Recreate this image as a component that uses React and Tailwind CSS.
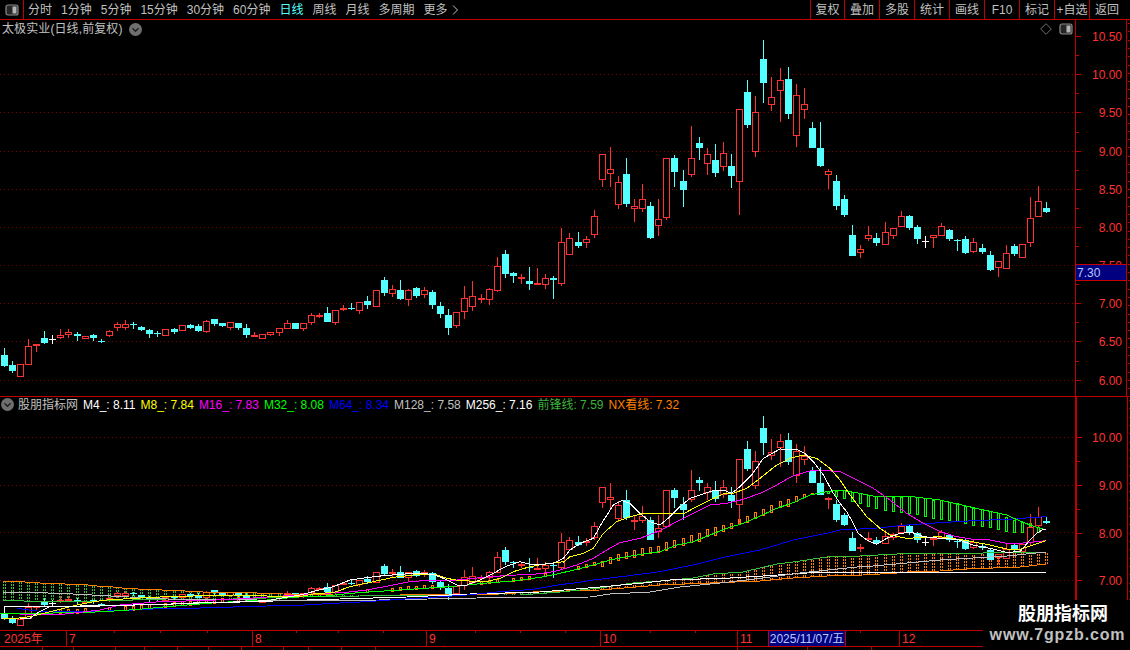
import React from "react";

const RED = "#ff3232", CY = "#54ffff", LINE = "#c00000";
const A = [[294,315,347,350,'c'],[333,345,362,368,'c'],[343,343,380,380,'r'],[267,289,344,344,'r'],[282,282,288,305,'r'],[243,265,279,281,'c'],[255,268,269,281,'w'],[237,256,263,266,'r'],[237,247,254,263,'r'],[246,252,257,272,'c'],[257,257,266,266,'r'],[252,255,263,272,'c'],[267,272,274,278,'c'],[241,244,257,262,'r'],[216,222,233,242,'r'],[210,222,233,240,'r'],[216,222,224,236,'c'],[228,232,240,242,'c'],[237,240,251,263,'c'],[243,250,252,260,'c'],[238,238,257,259,'r'],[234,237,246,251,'c'],[226,226,242,242,'r'],[222,225,234,236,'c'],[222,228,243,245,'c'],[210,214,245,248,'r'],[207,207,222,228,'c'],[219,219,228,231,'c'],[216,217,233,239,'r'],[219,219,234,239,'c'],[222,234,255,263,'c'],[246,255,260,262,'r'],[252,253,266,266,'r'],[247,247,254,258,'r'],[234,235,248,258,'r'],[210,220,236,237,'r'],[219,219,237,237,'c']];
const B = [[340,340,356,362,'r'],[310,316,338,344,'r'],[310,316,320,323,'r'],[291,309,336,336,'c'],[300,301,338,345,'r'],[286,294,299,302,'r'],[280,294,297,300,'c'],[276,277,302,312,'r'],[258,273,285,296,'c'],[241,241,290,290,'r'],[201,210,249,258,'c'],[225,238,251,261,'r'],[210,240,267,270,'c'],[238,241,269,287,'r'],[231,234,258,264,'c'],[232,241,254,263,'r'],[240,246,285,297,'c'],[276,288,312,324,'c'],[297,315,354,375,'c'],[306,307,347,354,'r'],[228,265,305,327,'r'],[213,259,290,303,'r'],[252,264,269,279,'r'],[234,238,269,285,'r'],[141,169,242,245,'r'],[120,132,192,204,'c'],[186,189,198,219,'c'],[192,201,206,222,'r'],[171,213,222,240,'c'],[174,220,222,224,'r'],[192,205,224,237,'r'],[198,204,210,267,'c'],[54,97,221,228,'r'],[69,85,134,135,'r'],[66,96,108,114,'c'],[78,88,98,114,'r']];
const C = [[541,559,616,624,'r'],[373,373,449,470,'r'],[352,418,433,471,'r'],[438,457,524,537,'r'],[384,432,522,530,'c'],[507,529,536,576,'r'],[462,508,536,545,'r'],[516,528,624,627,'c'],[507,568,587,618,'r'],[385,385,563,569,'r'],[375,384,426,471,'c'],[420,453,480,531,'c'],[288,385,434,441,'r'],[321,339,354,390,'c'],[354,373,401,435,'r'],[342,390,429,441,'c'],[336,370,410,423,'r'],[372,408,438,474,'c'],[238,238,455,555,'r'],[150,186,285,294,'c'],[198,247,365,381,'r'],[30,87,159,219,'c'],[141,202,224,243,'r'],[114,151,182,276,'r'],[111,147,252,267,'c'],[162,196,317,351,'r'],[174,223,239,267,'r'],[276,294,354,354,'c'],[276,354,408,411,'c'],[417,424,434,477,'r'],[435,453,528,540,'c']];
const D = [[75,87,135,140,'c'],[165,195,258,258,'c'],[225,238,248,264,'r'],[168,196,206,213,'r'],[189,204,219,228,'c'],[156,187,224,225,'r'],[174,175,197,207,'r'],[123,139,171,171,'r'],[135,138,174,180,'c'],[165,171,207,222,'c'],[198,214,216,234,'w'],[196,196,203,234,'r'],[159,169,197,198,'r'],[177,180,207,213,'c'],[207,211,214,243,'c'],[198,207,249,252,'c'],[205,217,246,249,'r'],[222,234,246,252,'c'],[243,255,300,303,'c'],[274,274,293,321,'r'],[225,250,296,297,'r'],[222,228,252,258,'c'],[222,223,263,264,'r'],[81,145,218,231,'r'],[48,94,140,141,'r'],[96,114,126,129,'c']];

const toAbs = (arr, y0) => arr.map(([a, b, c, d, t]) => [y0 + a / 3, y0 + b / 3, y0 + c / 3, y0 + d / 3, t]);
const CANDLES = [...toAbs(A, 250), ...toAbs(B, 210), ...toAbs(C, 30), ...toAbs(D, 170)];
const cx = (i) => Math.floor(4.33 + 8.08 * i);

const P = (x0, y0, a) => a.map(([x, y]) => [x0 + x / 3, y0 + y / 3]);
const join = (...segs) => {
  let out = [];
  segs.forEach((s) => {
    out = out.filter((p) => p[0] < s[0][0]).concat(s);
  });
  return out;
};
const M4 = join(
  P(0, 550, [[60,205],[90,205],[115,187],[150,170],[200,170],[300,165],[400,165],[500,163],[600,158],[700,156],[800,152],[900,150]]),
  P(300, 540, [[0,165],[50,152],[100,140],[150,120],[200,113],[250,107],[300,103],[350,100],[400,103],[430,115],[470,135],[500,135],[540,120],[580,100],[620,78],[660,65],[700,75],[760,70],[790,55]]),
  P(560, 410, [[10,445],[30,420],[60,400],[100,385],[125,340],[160,285],[185,272],[210,280],[240,310],[270,335],[300,345],[330,320],[360,290],[390,265],[420,255],[460,242],[490,240],[515,250],[540,230],[575,195],[610,145],[660,117],[710,118],[735,130],[760,155],[790,195],[820,250],[850,300],[880,345]]),
  P(840, 470, [[0,100],[20,125],[40,160],[55,190],[80,210],[110,223],[140,205],[180,190],[215,187],[250,200],[300,205],[350,208],[400,225],[450,235],[500,247],[540,245],[570,210],[590,190],[610,178],[618,180]])
);
const M8 = join(
  P(0, 550, [[5,205],[50,205],[90,200],[130,190],[190,175],[230,165],[280,155],[320,150],[400,145],[500,140],[700,135],[800,138],[900,135]]),
  P(300, 540, [[0,170],[50,160],[100,158],[150,140],[220,125],[280,112],[340,105],[400,102],[440,115],[480,122],[560,125],[600,115],[640,95],[690,80],[730,73],[790,65]]),
  P(560, 410, [[10,457],[30,440],[70,430],[100,415],[130,370],[170,335],[210,320],[250,310],[370,312],[400,295],[450,270],[490,252],[520,250],[560,235],[600,205],[650,165],[690,145],[730,135],[770,145],[810,175],[850,230]]),
  P(840, 470, [[0,30],[30,75],[80,140],[120,175],[150,195],[200,205],[300,200],[370,210],[450,225],[500,237],[540,238],[580,225],[618,212]])
);
const M16 = join(
  P(0, 550, [[60,195],[120,192],[170,195],[240,187],[300,180],[360,165],[420,160],[480,155],[600,152],[700,148],[850,138],[900,135]]),
  P(300, 540, [[0,165],[60,160],[130,158],[200,150],[280,135],[330,125],[400,120],[470,120],[570,110],[650,105],[700,103],[750,97]]),
  P(560, 410, [[0,480],[50,465],[100,445],[140,420],[180,398],[240,385],[300,362],[350,335],[400,310],[450,285],[500,280],[550,268],[600,250],[650,225],[700,197],[750,183],[800,182]]),
  P(840, 470, [[0,5],[50,30],[100,55],[150,90],[200,130],[250,160],[300,185],[350,200],[400,208],[450,210],[500,220],[540,220],[580,216],[618,212]])
);
const M32 = join(
  P(0, 550, [[0,190],[80,190],[240,188],[310,185],[375,181],[440,176],[500,170],[560,165],[620,160],[700,155],[800,150],[900,143]]),
  P(300, 540, [[0,170],[60,170],[150,160],[220,155],[300,150],[370,145],[450,140],[550,130],[650,122],[720,112]]),
  P(560, 410, [[0,490],[50,478],[100,465],[150,450],[200,440],[250,432],[300,425],[350,405],[400,395],[450,375],[500,355],[550,340],[600,318],[650,295],[700,278],[750,255],[800,245],[850,243]]),
  P(840, 470, [[0,60],[30,65],[60,70],[100,78],[200,78],[300,90],[400,113],[500,135],[540,153],[570,165],[618,180]])
);
const M64 = join(
  P(0, 550, [[50,175],[110,183],[240,185],[320,183],[400,180],[500,175],[600,174],[700,171],[800,168],[900,165]]),
  P(300, 540, [[0,196],[100,190],[200,185],[300,178],[400,172],[500,165],[600,155],[700,148],[780,137]]),
  P(560, 410, [[0,524],[50,518],[100,510],[200,498],[300,485],[400,465],[500,440],[600,420],[700,390],[800,370],[840,364]]),
  P(840, 470, [[0,180],[100,175],[200,165],[300,158],[400,152],[500,148],[618,140]])
);
const M128 = [[3,592],[23,592],[73,594],[167,599],[257,600],[330,601],[477,598],[590,597],[610,594],[650,592],[680,587],[720,583],[763,578],[800,573],[857,567],[873,566],[907,563],[940,560],[973,558],[1007,556],[1046,552]];
const M256 = [[4,615],[4,607],[100,606],[207,603],[340,599],[407,597],[470,594],[540,592],[600,587],[643,583],[670,580],[730,578],[763,576],[807,573],[1046,572]];
const FRONT = [[3,600],[23,600],[25,602],[100,601],[167,599],[207,600],[233,599],[267,598],[300,597],[360,596],[440,595],[520,595],[560,592],[600,588],[633,583],[660,581],[693,578],[713,574],[743,572],[777,564],[793,562],[827,557],[860,556],[897,554],[937,553],[983,553],[1046,552]];
const NX = [[3,581],[25,582],[40,583],[65,584],[88,585],[97,586],[113,587],[122,588],[138,589],[162,590],[185,591],[203,592],[227,592],[257,593],[283,594],[333,595],[400,595],[500,594],[533,592],[600,590],[660,585],[710,583],[760,581],[793,578],[827,576],[863,575],[897,573],[907,572],[940,571],[967,569],[1020,567],[1046,564]];

const at = (line, x) => {
  if (x <= line[0][0]) return line[0][1];
  for (let k = 1; k < line.length; k++) {
    if (x <= line[k][0]) {
      const [x0, y0] = line[k - 1], [x1, y1] = line[k];
      return x1 === x0 ? y1 : y0 + ((y1 - y0) * (x - x0)) / (x1 - x0);
    }
  }
  return line[line.length - 1][1];
};

const ORANGE_SMALL = [7,8,9,10,13,15,16,17,18,20,21,22,23,24,25,26,27,29,30,31,45,48,49,50,51,52,53,59,60,61,63,64,65,67,71,72,73];
const ORANGE_BARS = [[453,468],[440,458],[432,450],[427,445],[420,440],[413,434],[411,430],[408,427],[397,422],[391,411],[384,405],[375,397],[370,393],[358,380],[351,375],[345,362],[339,355],[327,343],[318,335],[307,325],[297,315],[285,305],[274,292],[267,287],[258,272],[253,263],[250,253]].map(([a, b]) => [410 + a / 3, 410 + b / 3]);
const GREEN_BARS_8 = [[243,250],[243,258]].map(([a, b]) => [410 + a / 3, 410 + b / 3]);
const GREEN_BARS_9 = [[60,85],[65,92],[70,100],[75,108],[78,115],[78,120],[80,123],[80,125],[78,128],[82,133],[85,140],[90,145],[90,148],[95,150],[100,153],[108,158],[113,163],[118,168],[123,172],[130,178],[140,183],[150,186],[157,188],[160,170],[172,187]].map(([a, b]) => [470 + a / 3, 470 + b / 3]);

const Candles = ({ map }) =>
  CANDLES.map(([wt, bt, bb, wb, t], i) => {
    const x = cx(i);
    const top = Math.round(map(bt)), bot = Math.round(map(bb));
    const col = t === "c" ? CY : t === "r" ? RED : "#ffffff";
    const wx = x + 0.5;
    return (
      <g key={i}>
        <line x1={wx} x2={wx} y1={map(wt)} y2={map(wb)} stroke={col} strokeWidth="1" />
        {t === "r" ? (
          <rect x={x - 2.5} y={top + 0.5} width="6" height={Math.max(1, bot - top - 1)} fill="#000" stroke={col} strokeWidth="1" />
        ) : (
          <rect x={x - 3} y={top} width="7" height={Math.max(1, bot - top)} fill={col} />
        )}
      </g>
    );
  });

const Line = ({ pts, c, w = 1 }) => (
  <polyline points={pts.map((p) => p.join(",")).join(" ")} fill="none" stroke={c} strokeWidth={w} />
);
const Grid = ({ ys }) =>
  ys.map((y) => <line key={y} x1="0" x2="1075" y1={y + 0.5} y2={y + 0.5} stroke="#800000" strokeWidth="1" strokeDasharray="1 3" />);

const Bar = ({ x, t, b, c }) => (
  <rect x={x - 0.5} y={Math.round(t) + 0.5} width="2" height={Math.max(1, Math.round(b - t))} fill="none" stroke={c} strokeWidth="1" />
);

const toLower = (y) => 533 + ((y - 227.3) * 47.7) / 76.4;

const HalfBox = () => (
  <svg width="14" height="12" viewBox="0 0 14 12" className="shrink-0">
    <rect x="1" y="1" width="12" height="10" rx="2" fill="#262626" stroke="#8a8a8a" strokeWidth="1.2" />
    <rect x="7.5" y="2.5" width="4" height="7" fill="#b4b4b4" />
  </svg>
);
const Chevron = () => (
  <svg width="13" height="13" viewBox="0 0 13 13" className="shrink-0">
    <circle cx="6.5" cy="6.5" r="6.5" fill="#6f6f6f" />
    <path d="M3.5 5.2 L6.5 8.2 L9.5 5.2" fill="none" stroke="#1e1e1e" strokeWidth="1.4" />
  </svg>
);

const Axis = ({ labels, height, thick, children }) => {
  const rightTicks = [];
  for (let y = 3; y < height; y += 8.3) rightTicks.push(Math.round(y));
  return (
    <div className={`relative w-[55px] h-full shrink-0 ${thick ? "border-l-2" : "border-l"} border-[#c00000]`}>
      <div className="h-full w-[51px] border-r border-[#c00000]" />
      <svg className="absolute inset-0" width="55" height={height} shapeRendering="crispEdges">
        {labels.map(([t, y, minorY]) => (
          <g key={t}>
            <line x1="0" x2="5" y1={y + 0.5} y2={y + 0.5} stroke={LINE} />
            <line x1="0" x2="3" y1={minorY + 0.5} y2={minorY + 0.5} stroke={LINE} />
          </g>
        ))}
        {rightTicks.map((y) => (
          <line key={y} x1="52" x2="54" y1={y + 0.5} y2={y + 0.5} stroke={LINE} />
        ))}
      </svg>
      {labels.map(([t, y]) => (
        <span key={t} className="absolute right-[8px] leading-[14px] text-[#ff3232] text-[12px]" style={{ top: y - 6 }}>
          {t}
        </span>
      ))}
      {children}
    </div>
  );
};

const TABS = ["分时", "1分钟", "5分钟", "15分钟", "30分钟", "60分钟", "日线", "周线", "月线", "多周期"];
const TOOLS = [["复权", 34], ["叠加", 35], ["多股", 35], ["统计", 35], ["画线", 35], ["F10", 35], ["标记", 35], ["+自选", 35], ["返回", 35]];
const TOP_LABELS = [["10.50",36,55],["10.00",74,93],["9.50",112,132],["9.00",151,170],["8.50",189,208],["8.00",227,246],["7.50",265,284],["7.00",303,322],["6.50",341,361],["6.00",380,399]].map(([t, y, m]) => [t, y - 20, m - 20]);
const LOW_LABELS = [["10.00",437,461],["9.00",485,509],["8.00",533,556],["7.00",580,600]].map(([t, y, m]) => [t, y - 397, m - 397]);
const INDICATORS = [
  ["M4_: 8.11", "text-white"],
  ["M8_: 7.84", "text-[#ffff00]"],
  ["M16_: 7.83", "text-[#ff00ff]"],
  ["M32_: 8.08", "text-[#00ff00]"],
  ["M64_: 8.34", "text-[#0000ff]"],
  ["M128_: 7.58", "text-[#c0c0c0]"],
  ["M256_: 7.16", "text-white"],
  ["前锋线: 7.59", "text-[#3cb43c]"],
  ["NX看线: 7.32", "text-[#ff8000]"],
];
const MONTHS = [["2025年", 67], ["7", 186], ["8", 174], ["9", 174], ["10", 137], ["11", 162], ["12", 230]];

export default function App() {
  return (
    <div className="relative w-[1130px] h-[650px] overflow-hidden bg-black text-[12px] text-[#c0c0c0] font-['Liberation_Sans','Noto_Sans_CJK_SC',sans-serif]">
      {/* toolbar */}
      <div className="flex h-[20px] items-stretch border-b border-[#c00000]">
        <div className="flex w-[24px] shrink-0 items-center justify-center border-r border-[#c00000]">
          <HalfBox />
        </div>
        <div className="flex flex-1 items-center gap-[9px] pl-[4px] leading-none">
          {TABS.map((t) => (
            <span key={t} className={t === "日线" ? "text-[#54ffff]" : ""}>{t}</span>
          ))}
          <span className="flex items-center gap-[4px]">
            更多
            <svg width="7" height="10" viewBox="0 0 7 10"><path d="M1 0.5 L5.5 5 L1 9.5" fill="none" stroke="#c0c0c0" /></svg>
          </span>
        </div>
        <div className="flex">
          {TOOLS.map(([t, w], i) => (
            <div key={t} className={`flex items-center justify-center border-l border-[#c00000] ${i === 8 ? "w-[41px] pr-[6px]" : w === 34 ? "w-[34px]" : "w-[35px]"}`}>
              {t}
            </div>
          ))}
        </div>
      </div>

      {/* main pane */}
      <div className="flex h-[377px] border-b border-[#c00000]">
        <div className="relative w-[1075px] shrink-0 overflow-hidden">
          <svg className="absolute inset-0" width="1075" height="376" viewBox="0 20 1075 376" shapeRendering="crispEdges">
            <Grid ys={[74,112,151,189,227,265,303,341,380]} />
            <Candles map={(y) => y} />
          </svg>
          <div className="relative flex h-[18px] items-center gap-[6px] pl-[2px]">
            <span className="tracking-[0.1px]">太极实业(日线,前复权)</span>
            <Chevron />
          </div>
          <div className="absolute right-[2px] top-[3px] flex items-center gap-[7px]">
            <svg width="12" height="12" viewBox="0 0 12 12"><path d="M6 0.7 L11.3 6 L6 11.3 L0.7 6 Z" fill="none" stroke="#6f6f6f" /></svg>
            <HalfBox />
          </div>
        </div>
        <Axis labels={TOP_LABELS} height={376}>
          <div className="absolute left-[-1px] top-[244px] flex h-[17px] w-[52px] items-center border border-[#c80000] bg-[#000080] pl-[1px] text-[#b8c8ff]">
            7.30
          </div>
        </Axis>
      </div>

      {/* indicator pane */}
      <div className="flex h-[233px]">
        <div className="relative w-[1075px] shrink-0 overflow-hidden">
          <svg className="absolute inset-0" width="1075" height="233" viewBox="0 397 1075 233" shapeRendering="crispEdges">
            <Grid ys={[437,485,532,580]} />
            {CANDLES.map((_, i) => {
              const x = cx(i);
              const a = Math.round(at(NX, x)), b = Math.round(at(FRONT, x));
              const c = a < b ? "#38c038" : "#ff8000";
              return (
                <g key={i}>
                  <line x1={x - 0.5} x2={x - 0.5} y1={a} y2={b} stroke={c} strokeDasharray="2 1" />
                  <line x1={x + 1.5} x2={x + 1.5} y1={a} y2={b} stroke={c} strokeDasharray="2 1" />
                </g>
              );
            })}
            {ORANGE_SMALL.map((i) => {
              const b = at(M32, cx(i));
              return <Bar key={i} x={cx(i)} t={b - (i < 32 ? 4 : 3)} b={b} c="#ff8000" />;
            })}
            {ORANGE_BARS.map(([t, b], k) => <Bar key={k} x={cx(74 + k)} t={t} b={b} c="#ff8000" />)}
            {GREEN_BARS_8.map(([t, b], k) => <Bar key={k} x={cx(102 + k)} t={t} b={b} c="#00ff00" />)}
            {GREEN_BARS_9.map(([t, b], k) => <Bar key={k} x={cx(104 + k)} t={t} b={b} c="#00ff00" />)}
            <Candles map={toLower} />
            <Line pts={NX} c="#ff8000" />
            <Line pts={FRONT} c="#38c038" />
            <Line pts={M256} c="#ffffff" />
            <Line pts={M128} c="#c0c0c0" />
            <Line pts={M64} c="#0000ff" />
            <Line pts={M32} c="#00ff00" />
            <Line pts={M16} c="#ff00ff" />
            <Line pts={M8} c="#ffff00" />
            <Line pts={M4} c="#ffffff" />
          </svg>
          <div className="relative flex h-[15px] items-center gap-[5px] pl-[1px] whitespace-nowrap">
            <span className="-mr-[1px] flex"><Chevron /></span>
            <span>股朋指标网</span>
            {INDICATORS.map(([t, c]) => <span key={t} className={c}>{t}</span>)}
          </div>
        </div>
        <Axis labels={LOW_LABELS} height={233} thick />
      </div>

      {/* time axis */}
      <div className="relative flex h-[17px] border-y border-[#c00000] text-[#ff3232]">
        {MONTHS.map(([t, w]) => (
          <div key={t} className="flex shrink-0 items-center border-r border-[#c00000] pl-[2px] first:pl-[4px]" style={{ width: w }}>
            {t}
          </div>
        ))}
        <svg className="absolute left-0 top-0" width="983" height="3" shapeRendering="crispEdges">
          {[114,160,207,296,338,383,475,520,565,650,695,860].map((x) => (
            <line key={x} x1={x + 0.5} x2={x + 0.5} y1="0" y2="2" stroke={LINE} />
          ))}
        </svg>
        <div className="absolute left-[768px] top-0 flex h-[15px] w-[78px] items-center justify-center border-x border-[#c00000] bg-[#000080] text-[#b8c8ff]">
          2025/11/07/五
        </div>
      </div>

      {/* strip of cut-off tabs */}
      <svg className="block" width="983" height="3" shapeRendering="crispEdges">
        {[42,73,115,144,177,208,241,283,308,341,375,737,807,871].map((x) => (
          <line key={x} x1={x + 0.5} x2={x + 0.5} y1="0" y2="3" stroke={LINE} />
        ))}
      </svg>

      {/* watermark */}
      <div className="absolute left-[983px] top-[600px] flex h-[50px] w-[147px] flex-col items-center bg-black pt-[3px] font-bold">
        <span className="pl-[13px] text-[18px] leading-[22px] text-white">股朋指标网</span>
        <span className="mt-[1px] pl-[2px] text-[16px] leading-[18px] tracking-[0.85px] text-[#c0c0c0]">www.7gpzb.com</span>
      </div>
    </div>
  );
}
